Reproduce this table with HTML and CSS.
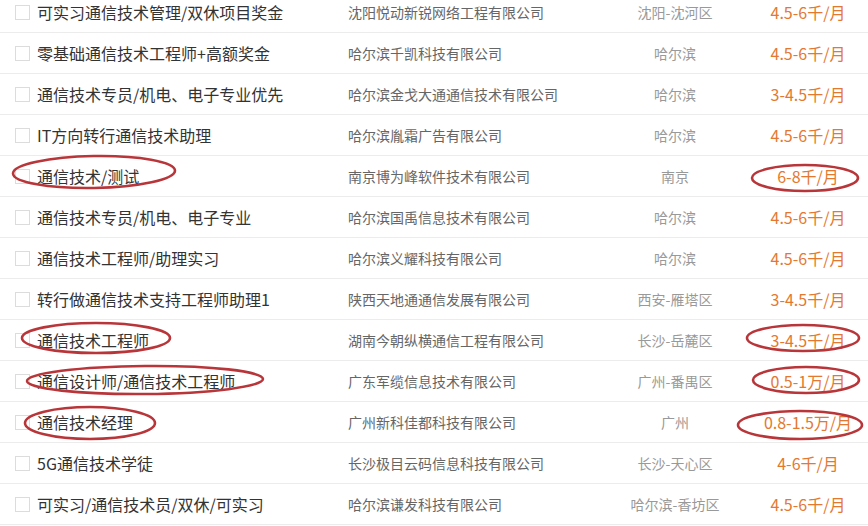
FILE: index.html
```html
<!DOCTYPE html>
<html lang="zh-CN">

<head>
    <meta charset="UTF-8">
    <meta name="viewport" content="width=device-width, initial-scale=1.0">
    <title>职位列表</title>
    <link rel="stylesheet" href="styles.css">
</head>

<body>
    <div class="job_wrap">
        <ul class="job_list">
            <li class="job_row">
                <span class="check"></span>
                <span class="title">可实习通信技术管理/双休项目奖金</span>
                <span class="company">沈阳悦动新锐网络工程有限公司</span>
                <span class="city">沈阳-沈河区</span>
                <span class="salary">4.5-6千/月</span>
            </li>
            <li class="job_row">
                <span class="check"></span>
                <span class="title">零基础通信技术工程师+高额奖金</span>
                <span class="company">哈尔滨千凯科技有限公司</span>
                <span class="city">哈尔滨</span>
                <span class="salary">4.5-6千/月</span>
            </li>
            <li class="job_row">
                <span class="check"></span>
                <span class="title">通信技术专员/机电、电子专业优先</span>
                <span class="company">哈尔滨金戈大通通信技术有限公司</span>
                <span class="city">哈尔滨</span>
                <span class="salary">3-4.5千/月</span>
            </li>
            <li class="job_row">
                <span class="check"></span>
                <span class="title">IT方向转行通信技术助理</span>
                <span class="company">哈尔滨胤霜广告有限公司</span>
                <span class="city">哈尔滨</span>
                <span class="salary">4.5-6千/月</span>
            </li>
            <li class="job_row">
                <span class="check"></span>
                <span class="title">通信技术/测试</span>
                <span class="company">南京博为峰软件技术有限公司</span>
                <span class="city">南京</span>
                <span class="salary">6-8千/月</span>
            </li>
            <li class="job_row">
                <span class="check"></span>
                <span class="title">通信技术专员/机电、电子专业</span>
                <span class="company">哈尔滨国禹信息技术有限公司</span>
                <span class="city">哈尔滨</span>
                <span class="salary">4.5-6千/月</span>
            </li>
            <li class="job_row">
                <span class="check"></span>
                <span class="title">通信技术工程师/助理实习</span>
                <span class="company">哈尔滨义耀科技有限公司</span>
                <span class="city">哈尔滨</span>
                <span class="salary">4.5-6千/月</span>
            </li>
            <li class="job_row">
                <span class="check"></span>
                <span class="title">转行做通信技术支持工程师助理1</span>
                <span class="company">陕西天地通通信发展有限公司</span>
                <span class="city">西安-雁塔区</span>
                <span class="salary">3-4.5千/月</span>
            </li>
            <li class="job_row">
                <span class="check"></span>
                <span class="title">通信技术工程师</span>
                <span class="company">湖南今朝纵横通信工程有限公司</span>
                <span class="city">长沙-岳麓区</span>
                <span class="salary">3-4.5千/月</span>
            </li>
            <li class="job_row">
                <span class="check"></span>
                <span class="title">通信设计师/通信技术工程师</span>
                <span class="company">广东军缆信息技术有限公司</span>
                <span class="city">广州-番禺区</span>
                <span class="salary">0.5-1万/月</span>
            </li>
            <li class="job_row">
                <span class="check"></span>
                <span class="title">通信技术经理</span>
                <span class="company">广州新科佳都科技有限公司</span>
                <span class="city">广州</span>
                <span class="salary">0.8-1.5万/月</span>
            </li>
            <li class="job_row">
                <span class="check"></span>
                <span class="title">5G通信技术学徒</span>
                <span class="company">长沙极目云码信息科技有限公司</span>
                <span class="city">长沙-天心区</span>
                <span class="salary">4-6千/月</span>
            </li>
            <li class="job_row">
                <span class="check"></span>
                <span class="title">可实习/通信技术员/双休/可实习</span>
                <span class="company">哈尔滨谦发科技有限公司</span>
                <span class="city">哈尔滨-香坊区</span>
                <span class="salary">4.5-6千/月</span>
            </li>
        </ul>

        <!-- 红色圈注 -->
        <svg class="marks" width="868" height="526" viewBox="0 0 868 526">
            <g fill="none" stroke="#b8363a" stroke-width="2.6">
                <ellipse cx="94" cy="172" rx="81" ry="16" transform="rotate(-1 94 172)" />
                <ellipse cx="805" cy="178" rx="53" ry="13" />
                <ellipse cx="96" cy="338" rx="74" ry="15" />
                <ellipse cx="803" cy="338" rx="56" ry="13" />
                <ellipse cx="145" cy="380" rx="118" ry="14" transform="rotate(-0.5 145 380)" />
                <ellipse cx="806" cy="380" rx="53" ry="13" />
                <ellipse cx="90" cy="423" rx="65" ry="16" />
                <ellipse cx="800" cy="425" rx="62" ry="14" />
            </g>
        </svg>
    </div>
</body>

</html>
```

FILE: styles.css
```css
body {
    margin: 0;
    background: #fff;
    font-family: "Noto Sans CJK SC", "Noto Sans", sans-serif;
}

.job_wrap {
    position: relative;
    width: 868px;
    height: 526px;
    overflow: hidden;
}

.job_list {
    list-style: none;
    margin: -8px 0 0 0;
    padding: 0;
}

.job_row {
    display: flex;
    align-items: center;
    height: 40px;
    border-bottom: 1px solid #ececec;
}

.check {
    width: 13px;
    height: 13px;
    border: 1px solid #dcdcdc;
    margin-left: 15px;
    margin-right: 7px;
    flex: none;
}

.title {
    width: 311px;
    font-size: 16px;
    color: #333;
    white-space: nowrap;
}

.company {
    width: 262px;
    font-size: 14px;
    color: #666;
    white-space: nowrap;
}

.city {
    width: 130px;
    font-size: 14px;
    color: #999;
    text-align: center;
    white-space: nowrap;
}

.salary {
    width: 116px;
    margin-left: 10px;
    font-size: 16px;
    color: #e5782f;
    text-align: center;
    white-space: nowrap;
}

.marks {
    position: absolute;
    left: 0;
    top: 0;
    pointer-events: none;
}
```
